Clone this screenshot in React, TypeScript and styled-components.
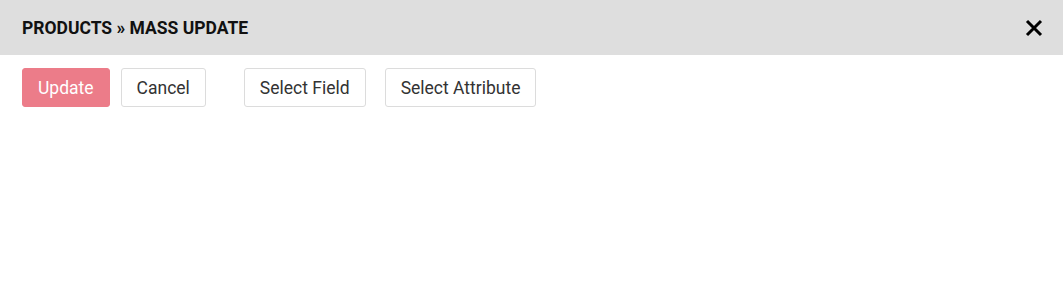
import React from "react";
import styled, { createGlobalStyle } from "styled-components";

const Global = createGlobalStyle`
  html, body { margin: 0; padding: 0; background: #fff; }
  body { font-family: Roboto, "Liberation Sans", Arial, sans-serif; }
  * { box-sizing: border-box; }
`;

const Modal = styled.div`
  width: 1063px;
  height: 302px;
  background: #fff;
`;

const Header = styled.div`
  height: 55px;
  background: #dedede;
  display: flex;
  align-items: center;
  justify-content: space-between;
  padding: 0 17px 0 22px;
`;

const Title = styled.h1`
  margin: 0;
  font-size: 17.5px;
  font-weight: 700;
  color: #111;
  letter-spacing: 0;
`;

const Close = styled.button`
  border: 0;
  background: transparent;
  padding: 0;
  width: 24px;
  height: 24px;
  display: flex;
  align-items: center;
  justify-content: center;
  cursor: pointer;
`;

const Toolbar = styled.div`
  display: flex;
  align-items: center;
  padding: 13px 22px;
`;

const Group = styled.div<{ $gap: number }>`
  display: flex;
  gap: ${(p) => p.$gap}px;
  margin-right: 38px;
`;

const Button = styled.button<{ $primary?: boolean }>`
  height: 39px;
  padding: 0 15px;
  font-family: Roboto, "Liberation Sans", Arial, sans-serif;
  font-size: 17.5px;
  border-radius: 3px;
  cursor: pointer;
  color: ${(p) => (p.$primary ? "#fff" : "#333")};
  background: ${(p) => (p.$primary ? "#ec7c89" : "#fff")};
  border: 1px solid ${(p) => (p.$primary ? "#ec7c89" : "#dcdcdc")};
`;

export default function App() {
  return (
    <>
      <Global />
      <Modal>
        <Header>
          <Title>PRODUCTS » MASS UPDATE</Title>
          <Close aria-label="Close">
            <svg width="18" height="18" viewBox="0 0 18 18">
              <path d="M2 2 L16 16 M16 2 L2 16" stroke="#000" strokeWidth="3" strokeLinecap="butt" />
            </svg>
          </Close>
        </Header>
        <Toolbar>
          <Group $gap={11}>
            <Button $primary>Update</Button>
            <Button>Cancel</Button>
          </Group>
          <Group $gap={19}>
            <Button>Select Field</Button>
            <Button>Select Attribute</Button>
          </Group>
        </Toolbar>
      </Modal>
    </>
  );
}
